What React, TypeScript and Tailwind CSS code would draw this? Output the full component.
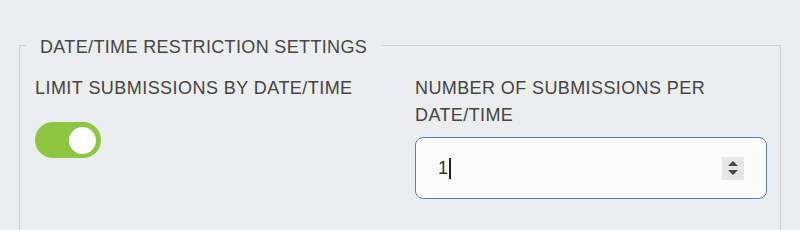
import { useState } from 'react';

const Toggle = ({ on, onChange }: { on: boolean; onChange: () => void }) => (
    <button
        type="button"
        role="switch"
        aria-checked={on}
        onClick={onChange}
        className={`flex items-center w-[66px] h-[36px] rounded-full px-[5px] ${on ? 'bg-[#8dc641] justify-end' : 'bg-[#c9cacc] justify-start'}`}
    >
        <span className="block w-[27px] h-[27px] rounded-full bg-white" />
    </button>
);

const App = () => {
    const [limit, setLimit] = useState(true);

    return (
        <div
            className="w-[800px] h-[230px] overflow-hidden bg-[#ecedef] pt-[32px] text-[#444]"
            style={{ fontFamily: '"Liberation Sans", Arial, sans-serif' }}
        >
            <fieldset className="ml-[19px] w-[762px] h-[260px] border-[1.5px] border-[#d0d1d3] pt-[17px]">
                <legend className="ml-[6px] px-[14px] pt-[4px] text-[18px] leading-[22px] tracking-[0.35px] text-[#474747]">
                    DATE/TIME RESTRICTION SETTINGS
                </legend>

                <div className="grid grid-cols-[352px_352px] gap-x-[28px] pl-[15px]">
                    <div>
                        <label className="block text-[18px] leading-[27px] tracking-[0.45px]">
                            LIMIT SUBMISSIONS BY DATE/TIME
                        </label>
                        <div className="mt-[20px]">
                            <Toggle on={limit} onChange={() => setLimit(!limit)} />
                        </div>
                    </div>

                    <div>
                        <label className="block text-[18px] leading-[27px] tracking-[0.4px]">
                            NUMBER OF SUBMISSIONS PER DATE/TIME
                        </label>
                        <div className="mt-[8px] flex items-center h-[62px] w-[352px] rounded-lg border-[1.5px] border-[#4f84c6] bg-[#fafafa] pl-[22px] pr-[22px]">
                            <span className="flex items-center text-[18px] leading-none text-[#333]">
                                1
                                <span className="ml-[1px] inline-block w-[1.5px] h-[21px] bg-[#222]" />
                            </span>
                            <div className="ml-auto flex flex-col items-center justify-center gap-[4px] w-[22px] h-[23px] bg-[#e7e7e8]">
                                <svg width="10" height="5" viewBox="0 0 10 5">
                                    <path d="M5 0 L10 5 L0 5 Z" fill="#454545" />
                                </svg>
                                <svg width="10" height="5" viewBox="0 0 10 5">
                                    <path d="M0 0 L10 0 L5 5 Z" fill="#454545" />
                                </svg>
                            </div>
                        </div>
                    </div>
                </div>
            </fieldset>
        </div>
    );
};

export default App;
